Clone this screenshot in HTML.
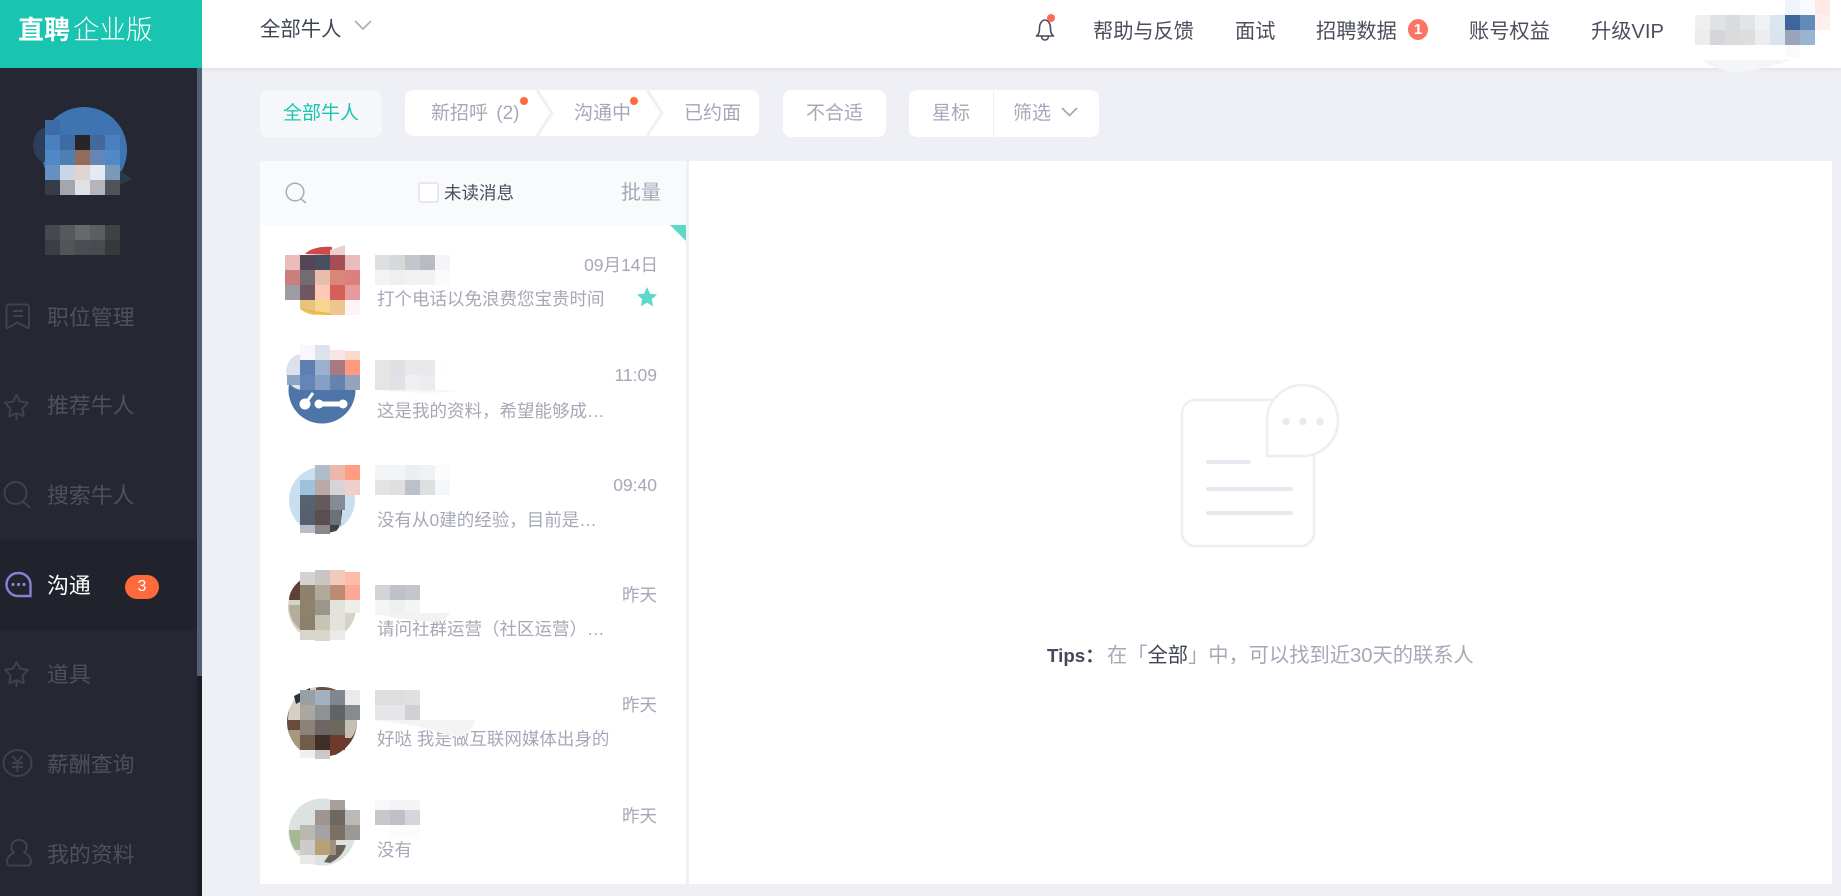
<!DOCTYPE html>
<html lang="zh"><head><meta charset="utf-8"><title>直聘企业版</title>
<style>
html,body{margin:0;padding:0;width:1841px;height:896px;overflow:hidden;background:#eff0f5}
body{position:relative;font-family:"Liberation Sans","Noto Sans CJK SC",sans-serif}
.b{position:absolute}
.t{position:absolute;white-space:nowrap;line-height:30px;height:30px}
.nav{font-size:21.875px;color:#4e5159;left:47px}
.top{font-size:20.2px;color:#4b4f5c;top:17px}
.tab{font-size:19px;color:#a6a8b7;top:99px}
.msg{font-size:17.5px;color:#a6a8b7;left:377px}
.time{font-size:17.5px;color:#a6a8b7;right:1184px}
svg.o{position:absolute;left:0;top:0}
</style></head><body>
<div class="b" style="left:0;top:0;width:1841px;height:68px;background:#fff;box-shadow:0 1px 4px rgba(200,204,216,.5)"></div>
<div class="b" style="left:0;top:0;width:202px;height:68px;background:#19c5b0"></div>
<div class="b" style="left:0;top:68px;width:197px;height:828px;background:#252832"></div>
<div class="b" style="left:197px;top:68px;width:5px;height:608px;background:#4f6074"></div>
<div class="b" style="left:197px;top:676px;width:5px;height:220px;background:#1a1e25"></div>
<div class="b" style="left:0;top:540px;width:197px;height:90px;background:#20232b"></div>

<div class="t" style="left:18px;top:15px;font-size:26px;color:#fff;font-weight:700">直聘<span style="font-weight:300;margin-left:3px;font-size:26.5px">企业版</span></div>
<div class="t" style="left:260px;top:15px;font-size:20.4px;color:#3f4555">全部牛人</div>

<div class="t top" style="left:1093px">帮助与反馈</div>
<div class="t top" style="left:1235px">面试</div>
<div class="t top" style="left:1316px">招聘数据</div>
<div class="b" style="left:1408px;top:19px;width:20px;height:21px;border-radius:50%;background:#fb7565;color:#fff;font-size:15px;font-weight:700;line-height:21px;text-align:center">1</div>
<div class="t top" style="left:1469px">账号权益</div>
<div class="t top" style="left:1591px">升级VIP</div>

<div class="b" style="left:260px;top:90px;width:122px;height:47px;border-radius:8px;background:#f6f7fa"></div>
<div class="b" style="left:405px;top:90px;width:354px;height:46px;border-radius:8px;background:#fff"></div>
<div class="b" style="left:783px;top:90px;width:103px;height:47px;border-radius:8px;background:#fff"></div>
<div class="b" style="left:909px;top:90px;width:190px;height:47px;border-radius:8px;background:#fff"></div>
<div class="b" style="left:993px;top:90px;width:1px;height:47px;background:#eff0f5"></div>

<div class="t tab" style="left:283px;color:#19c5b0">全部牛人</div>
<div class="t tab" style="left:431px">新招呼&nbsp;<span style="margin-left:3px">(2)</span></div>
<div class="t tab" style="left:574px">沟通中</div>
<div class="t tab" style="left:684px">已约面</div>
<div class="t tab" style="left:806px">不合适</div>
<div class="t tab" style="left:932px">星标</div>
<div class="t tab" style="left:1013px">筛选</div>

<div class="b" style="left:260px;top:161px;width:426px;height:723px;background:#fff"></div>
<div class="b" style="left:260px;top:161px;width:426px;height:64px;background:#f9fafc"></div>
<div class="b" style="left:689px;top:161px;width:1143px;height:723px;background:#fff"></div>
<div class="b" style="left:418px;top:182px;width:17px;height:17px;border:2px solid #e6e8ee;border-radius:3px;background:#fff"></div>
<div class="t" style="left:444px;top:178px;font-size:17.5px;color:#4a4f5e">未读消息</div>
<div class="t" style="left:621px;top:178px;font-size:20px;color:#a6a8b7">批量</div>

<div class="t time" style="top:250px;right:1183px">09月14日</div>
<div class="t msg" style="top:284px">打个电话以免浪费您宝贵时间</div>
<div class="t time" style="top:360px">11:09</div>
<div class="t msg" style="top:396px">这是我的资料，希望能够成…</div>
<div class="t time" style="top:470px">09:40</div>
<div class="t msg" style="top:505px">没有从0建的经验，目前是…</div>
<div class="t time" style="top:580px">昨天</div>
<div class="t msg" style="top:614px">请问社群运营（社区运营）…</div>
<div class="t time" style="top:690px">昨天</div>
<div class="t msg" style="top:724px">好哒 我是做互联网媒体出身的</div>
<div class="t time" style="top:801px">昨天</div>
<div class="t msg" style="top:835px">没有</div>

<div class="t nav" style="top:303px">职位管理</div>
<div class="t nav" style="top:391px">推荐牛人</div>
<div class="t nav" style="top:481px">搜索牛人</div>
<div class="t nav" style="top:571px;color:#fff">沟通</div>
<div class="t nav" style="top:660px">道具</div>
<div class="t nav" style="top:750px">薪酬查询</div>
<div class="t nav" style="top:840px">我的资料</div>
<div class="b" style="left:125px;top:575px;width:34px;height:24px;border-radius:12px;background:#ff6a3d;color:#fff;font-size:16px;line-height:24px;text-align:center">3</div>

<div class="t" style="left:1047px;top:641px;font-size:18.75px;font-weight:700;color:#444a5b">Tips：</div>
<div class="t" style="left:1107px;top:641px;font-size:20.25px;color:#a6a8b7">在「<span style="color:#3f4555">全部</span>」中，可以找到近30天的联系人</div>

<svg class="o" width="1841" height="896" viewBox="0 0 1841 896" xmlns="http://www.w3.org/2000/svg">
<!-- chevrons -->
<path d="M355 21l8 8 8-8" fill="none" stroke="#a9acb9" stroke-width="1.600"/>
<path d="M537 90l15 23-15 23M647 90l15 23-15 23" fill="none" stroke="#eff0f5" stroke-width="3"/>
<path d="M1062 108l7.500 7.500 7.500-7.500" fill="none" stroke="#a6a8b7" stroke-width="1.800"/>
<circle cx="524" cy="101" r="4" fill="#ff6a3d"/><circle cx="634" cy="101" r="4" fill="#ff6a3d"/>
<!-- bell -->
<path d="M1036.500 36c2.500-2 3-4 3-8 0-5 3-8 5.500-8s5.500 3 5.500 8c0 4 .5 6 3 8zM1041.500 36c0 2.500 1.500 4 3.500 4s3.500-1.500 3.500-4" fill="none" stroke="#484c59" stroke-width="1.600" stroke-linejoin="round"/>
<circle cx="1051" cy="18" r="4" fill="#fb6a55"/>
<!-- search -->
<circle cx="295" cy="192" r="8.800" fill="none" stroke="#a8abb8" stroke-width="1.500"/><path d="M301 199l5 4" stroke="#a8abb8" stroke-width="1.500"/>
<!-- corner & star -->
<path d="M670 225h16v16z" fill="#60d8c8"/>
<path d="M647 287l3 6.600 7 .9-5.200 4.700 1.400 7-6.200-3.500-6.200 3.500 1.400-7-5.200-4.700 7-.9z" fill="#5fd8c8"/>
<!-- illustration -->
<rect x="1182" y="400" width="132" height="146" rx="13" fill="#fff" stroke="#eceef3" stroke-width="2.500"/>
<path d="M1267 456V420.500a35.500 35.500 0 1 1 35.500 35.500z" fill="#fff" stroke="#eceef3" stroke-width="2.500"/>
<circle cx="1286" cy="421.500" r="3.700" fill="#e6e9ef"/><circle cx="1303" cy="421.500" r="3.700" fill="#e6e9ef"/><circle cx="1320" cy="421.500" r="3.700" fill="#e6e9ef"/>
<path d="M1208 462h41M1208 489h83M1208 513h83" stroke="#e6e9f0" stroke-width="4" stroke-linecap="round"/>
<!-- sidebar icons -->
<g fill="none" stroke="#3e424c" stroke-width="2" stroke-linejoin="round">
<path d="M9 304.500h17a3 3 0 0 1 3 3v21l-11.500-6L6.500 328.500v-21a3 3 0 0 1 2.500-3zM13 311h10M13 316h10"/>
<path d="M16.500 395l3.500 6.500 8 1.200-5.500 6 1.300 7.500-7.300-3-7.300 3 1.300-7.500-5.500-6 8-1.200zM16.500 413v7"/>
<circle cx="15.500" cy="493" r="11"/><path d="M22.500 501.500l7.500 6"/>
<path transform="translate(0 267)" d="M16.500 395l3.500 6.500 8 1.200-5.500 6 1.300 7.500-7.300-3-7.300 3 1.300-7.500-5.500-6 8-1.200zM16.500 413v7"/>
<ellipse cx="17.500" cy="763" rx="14" ry="13"/><path d="M12.500 756l5 6 5-6M12 763h11M12 767h11M17.500 762v10"/>
<path d="M19 840a7 7 0 0 1 5 12.500c4 2 7 5 7 9 0 2.500-1 4-3 4H10c-2 0-3-1.500-3-4 0-4 3-7 7-9a7 7 0 0 1 5-12.500z"/>
</g>
<path d="M18 573a11.500 11.500 0 1 0 0 23h12.500v-11.500a12 11.500 0 0 0-12.500-11.500z" fill="none" stroke="#8a7fd8" stroke-width="2.400"/>
<circle cx="13" cy="584.500" r="1.600" fill="#8a7fd8"/><circle cx="18.500" cy="584.500" r="1.600" fill="#8a7fd8"/><circle cx="24" cy="584.500" r="1.600" fill="#8a7fd8"/>

<!-- sidebar avatar -->
<circle cx="84" cy="150" r="43" fill="#3f74b3"/>
<ellipse cx="48" cy="145" rx="15" ry="18" fill="#2c3e58"/>
<path d="M100 195l12-30 20 14z" fill="#2c3a48"/><path d="M45 180h20v15H60c-8 0-15-5-15-15z" fill="#252832"/>
<g shape-rendering="crispEdges">
<rect x="45" y="120" width="15" height="15" fill="#3c6ba5"/>
<rect x="45" y="135" width="15" height="15" fill="#4a7fc0"/><rect x="60" y="135" width="15" height="15" fill="#3f6ba5"/><rect x="75" y="135" width="15" height="15" fill="#262626"/><rect x="90" y="135" width="15" height="15" fill="#436899"/><rect x="105" y="135" width="15" height="15" fill="#4a80bf"/>
<rect x="45" y="150" width="15" height="15" fill="#5088c8"/><rect x="60" y="150" width="15" height="15" fill="#4f7fb2"/><rect x="75" y="150" width="15" height="15" fill="#946a58"/><rect x="90" y="150" width="15" height="15" fill="#6485b5"/><rect x="105" y="150" width="15" height="15" fill="#5088c8"/>
<rect x="45" y="165" width="15" height="15" fill="#6690c0"/><rect x="60" y="165" width="15" height="15" fill="#cad6e8"/><rect x="75" y="165" width="15" height="15" fill="#e0d4d0"/><rect x="90" y="165" width="15" height="15" fill="#e5e9f3"/><rect x="105" y="165" width="15" height="15" fill="#7a9ab5"/>
<rect x="45" y="180" width="15" height="15" fill="#363d4a"/><rect x="60" y="180" width="15" height="15" fill="#a5a5ad"/><rect x="75" y="180" width="15" height="15" fill="#e0e0e5"/><rect x="90" y="180" width="15" height="15" fill="#b5b5ba"/><rect x="105" y="180" width="15" height="15" fill="#50525a"/>
<rect x="45" y="225" width="15" height="15" fill="#47474f"/><rect x="60" y="225" width="15" height="15" fill="#57585c"/><rect x="75" y="225" width="15" height="15" fill="#67686b"/><rect x="90" y="225" width="15" height="15" fill="#5b5d60"/><rect x="105" y="225" width="15" height="15" fill="#404145"/>
<rect x="45" y="240" width="15" height="15" fill="#3d3d45"/><rect x="60" y="240" width="15" height="15" fill="#535457"/><rect x="75" y="240" width="15" height="15" fill="#4b4d52"/><rect x="90" y="240" width="15" height="15" fill="#484b50"/><rect x="105" y="240" width="15" height="15" fill="#36383c"/>
</g>

<!-- header mosaic -->
<path d="M1702 60h90c-20 6-38 12-52 12s-28-4-38-12z" fill="#f4f5f7"/>
<g shape-rendering="crispEdges">
<rect x="1785" y="0" width="15" height="15" fill="#f0f3f9"/><rect x="1800" y="0" width="15" height="15" fill="#f9fafd"/><rect x="1815" y="0" width="15" height="15" fill="#ffe9e7"/>
<rect x="1695" y="15" width="15" height="15" fill="#efefef"/><rect x="1710" y="15" width="15" height="15" fill="#e1e2e5"/><rect x="1725" y="15" width="15" height="15" fill="#dadbdd"/><rect x="1740" y="15" width="15" height="15" fill="#e3e4e5"/><rect x="1755" y="15" width="15" height="15" fill="#f0f1f3"/><rect x="1770" y="15" width="15" height="15" fill="#dbe5f0"/><rect x="1785" y="15" width="15" height="15" fill="#3e659c"/><rect x="1800" y="15" width="15" height="15" fill="#628ab9"/><rect x="1815" y="15" width="15" height="15" fill="#ffefed"/>
<rect x="1695" y="30" width="15" height="15" fill="#ececec"/><rect x="1710" y="30" width="15" height="15" fill="#d5d6d9"/><rect x="1725" y="30" width="15" height="15" fill="#dadbdd"/><rect x="1740" y="30" width="15" height="15" fill="#dcdddf"/><rect x="1755" y="30" width="15" height="15" fill="#ecedef"/><rect x="1770" y="30" width="15" height="15" fill="#dae4f0"/><rect x="1785" y="30" width="15" height="15" fill="#9ba3ba"/><rect x="1800" y="30" width="15" height="15" fill="#98b4d1"/>
<rect x="1785" y="45" width="15" height="12" fill="#fafafa"/>
</g>

<!-- row 1 -->
<path d="M305 254c5-6 18-8 27-7v8z" fill="#d04848"/>
<path d="M285 260l15-6v6zM330 250l15-5v10h-15z" fill="#ebcfcf"/>
<g shape-rendering="crispEdges">
<rect x="285" y="255" width="15" height="15" fill="#ebbcbc"/><rect x="300" y="255" width="15" height="15" fill="#554655"/><rect x="315" y="255" width="15" height="15" fill="#475060"/><rect x="330" y="255" width="15" height="15" fill="#a34f55"/><rect x="345" y="255" width="15" height="15" fill="#ebbcbc"/>
<rect x="285" y="270" width="15" height="15" fill="#cc7d7d"/><rect x="300" y="270" width="15" height="15" fill="#726b72"/><rect x="315" y="270" width="15" height="15" fill="#e9bdab"/><rect x="330" y="270" width="15" height="15" fill="#d98679"/><rect x="345" y="270" width="15" height="15" fill="#dd7f7d"/>
<rect x="285" y="285" width="15" height="15" fill="#9c9ca5"/><rect x="300" y="285" width="15" height="15" fill="#6f5660"/><rect x="315" y="285" width="15" height="15" fill="#fcc9b4"/><rect x="330" y="285" width="15" height="15" fill="#d45f58"/><rect x="345" y="285" width="15" height="15" fill="#e59b9b"/>
<rect x="300" y="300" width="15" height="15" fill="#e6c47b"/><rect x="315" y="300" width="15" height="15" fill="#f5d68f"/><rect x="330" y="300" width="15" height="15" fill="#eec48f"/><rect x="345" y="300" width="15" height="15" fill="#fdf5f5"/>
<rect x="375" y="255" width="15" height="15" fill="#dedfe1"/><rect x="390" y="255" width="15" height="15" fill="#d7d8da"/><rect x="405" y="255" width="15" height="15" fill="#c3c6cd"/><rect x="420" y="255" width="15" height="15" fill="#babbc0"/><rect x="435" y="255" width="15" height="15" fill="#f5f5f7"/>
<rect x="375" y="270" width="15" height="15" fill="#f2f3f4"/><rect x="390" y="270" width="15" height="15" fill="#eeeff0"/><rect x="405" y="270" width="15" height="15" fill="#f1f2f3"/><rect x="420" y="270" width="15" height="15" fill="#f0f2f2"/><rect x="435" y="270" width="15" height="15" fill="#fafbfc"/>
</g>
<path d="M300 308c8 5 20 7 30 7v-2c-10-1-20-3-30-5z" fill="#f0b840"/>
<path d="M300 309c4 3 8 5 14 6h-14z" fill="#fff"/>

<!-- row 2 -->
<circle cx="322" cy="390" r="33.500" fill="#4d75a8"/>
<path d="M322 404h21" stroke="#fff" stroke-width="5"/><circle cx="319" cy="404" r="4.500" fill="#fff"/><circle cx="343" cy="404" r="4.500" fill="#fff"/><circle cx="305" cy="404" r="5.500" fill="#fff"/><path d="M305 404l8-11" stroke="#fff" stroke-width="3"/>
<ellipse cx="302" cy="372" rx="16" ry="18" fill="#dbe2ec"/>
<g shape-rendering="crispEdges">
<rect x="300" y="345" width="15" height="15" fill="#f7f8f9"/><rect x="315" y="345" width="15" height="15" fill="#dde2ec"/><rect x="330" y="350" width="15" height="10" fill="#f6e5e3"/><rect x="345" y="351" width="15" height="9" fill="#fdd9cd"/>
<rect x="300" y="360" width="15" height="15" fill="#5f7fb0"/><rect x="315" y="360" width="15" height="15" fill="#9bafcf"/><rect x="330" y="360" width="15" height="15" fill="#a87a82"/><rect x="345" y="360" width="15" height="15" fill="#fe9a7f"/>
<rect x="287" y="375" width="13" height="10" fill="#8ea5c5"/><rect x="300" y="375" width="15" height="15" fill="#6485b5"/><rect x="315" y="375" width="15" height="15" fill="#869fc5"/><rect x="330" y="375" width="15" height="15" fill="#6484b0"/><rect x="345" y="375" width="15" height="15" fill="#95a3bd"/>
<rect x="375" y="360" width="15" height="15" fill="#e5e5e5"/><rect x="390" y="360" width="15" height="15" fill="#dfe0e3"/><rect x="405" y="360" width="15" height="15" fill="#e9e9eb"/><rect x="420" y="360" width="15" height="15" fill="#e8e9ea"/><rect x="435" y="360" width="15" height="15" fill="#fdfefe"/>
<rect x="375" y="375" width="15" height="15" fill="#e5e5e3"/><rect x="390" y="375" width="15" height="15" fill="#dfe1e4"/><rect x="405" y="375" width="15" height="15" fill="#eeeff0"/><rect x="420" y="375" width="15" height="15" fill="#ebecee"/>
</g>
<path d="M375 390h85c-15 4-50 3-85 0z" fill="#f6f6f7"/>

<!-- row 3 -->
<circle cx="322" cy="500" r="33" fill="#c8dff0"/>
<path d="M334 510h8c0 8-2 18-6 21l-8 2z" fill="#3d4148"/>
<g shape-rendering="crispEdges">
<rect x="315" y="465" width="15" height="15" fill="#b0bcc8"/><rect x="330" y="465" width="15" height="15" fill="#eeb7ab"/><rect x="345" y="465" width="15" height="15" fill="#ff9c82"/>
<rect x="300" y="480" width="15" height="15" fill="#9dc2dc"/><rect x="315" y="480" width="15" height="15" fill="#b9a8a5"/><rect x="330" y="480" width="15" height="15" fill="#d6d3da"/><rect x="345" y="480" width="15" height="15" fill="#f0cfc8"/>
<rect x="300" y="495" width="15" height="15" fill="#56626f"/><rect x="315" y="495" width="15" height="15" fill="#64595d"/><rect x="330" y="495" width="15" height="15" fill="#858a95"/>
<rect x="300" y="510" width="15" height="15" fill="#55606e"/><rect x="315" y="510" width="15" height="15" fill="#5e4d50"/><rect x="330" y="510" width="11" height="15" fill="#6a7178"/>
<rect x="300" y="525" width="15" height="8" fill="#b8bcc4"/><rect x="315" y="525" width="15" height="9" fill="#8a8888"/>
<rect x="375" y="465" width="15" height="15" fill="#f3f4f5"/><rect x="390" y="465" width="15" height="15" fill="#f3f4f5"/><rect x="405" y="465" width="15" height="15" fill="#ecedf0"/><rect x="420" y="465" width="15" height="15" fill="#f0f1f2"/><rect x="435" y="465" width="15" height="15" fill="#fcfcfd"/>
<rect x="375" y="480" width="15" height="15" fill="#e3e3e6"/><rect x="390" y="480" width="15" height="15" fill="#dfdfe0"/><rect x="405" y="480" width="15" height="15" fill="#bcc0c9"/><rect x="420" y="480" width="15" height="15" fill="#dedfe1"/><rect x="435" y="480" width="15" height="15" fill="#f5f6f8"/>
</g>

<!-- row 4 -->
<circle cx="322" cy="607" r="34" fill="#d5d2c8"/>
<path d="M289 600c0-8 6-16 12-20v20z" fill="#5e4231"/>
<path d="M289 605h11v24c-7-5-11-14-11-24z" fill="#b5ac9c"/>
<g shape-rendering="crispEdges">
<rect x="300" y="572" width="15" height="13" fill="#d5d3cf"/><rect x="315" y="570" width="15" height="15" fill="#c8c6c2"/><rect x="330" y="570" width="15" height="15" fill="#f2c9bf"/><rect x="345" y="572" width="15" height="13" fill="#ffbaa9"/>
<rect x="300" y="585" width="15" height="15" fill="#8f7f6d"/><rect x="315" y="585" width="15" height="15" fill="#b1aa9c"/><rect x="330" y="585" width="15" height="15" fill="#bd8a74"/><rect x="345" y="585" width="15" height="15" fill="#fba996"/>
<rect x="300" y="600" width="15" height="15" fill="#8d836b"/><rect x="315" y="600" width="15" height="15" fill="#9a978a"/><rect x="330" y="600" width="15" height="15" fill="#e3e2dd"/><rect x="345" y="600" width="15" height="13" fill="#eeeee8"/>
<rect x="300" y="615" width="15" height="15" fill="#8d7f6d"/><rect x="315" y="615" width="15" height="15" fill="#c7c4b6"/><rect x="330" y="615" width="15" height="15" fill="#e4e2db"/>
<rect x="300" y="630" width="15" height="10" fill="#d8d6cc"/><rect x="315" y="630" width="15" height="11" fill="#d8d6cc"/><rect x="330" y="630" width="15" height="10" fill="#eaebe6"/>
<rect x="375" y="585" width="15" height="15" fill="#d3d4d6"/><rect x="390" y="585" width="15" height="15" fill="#bfc0c8"/><rect x="405" y="585" width="15" height="15" fill="#c5c6cd"/>
<rect x="375" y="600" width="15" height="15" fill="#f4f5f5"/><rect x="390" y="600" width="15" height="15" fill="#eeeff1"/><rect x="405" y="600" width="15" height="15" fill="#f3f4f5"/>
</g>
<path d="M375 613h75c-4 6-10 9-18 9-14-1-38-3-57-9z" fill="#f2f2f3"/>

<!-- row 5 -->
<circle cx="322" cy="722" r="35" fill="#6a4a3c"/>
<path d="M288 720c0-16 10-31 28-33v33z" fill="#d6cfc5"/><path d="M294 696l16-8v8l-14 8z" fill="#2e3136"/>
<path d="M345 720h12c0 8-2 14-6 18h-6z" fill="#c8bfb4"/>
<path d="M345 738h7c-3 8-10 14-17 17h-5v-5h15z" fill="#6d3a2d"/>
<path d="M288 730h12v20c-6-5-10-12-12-20z" fill="#a89880"/>
<g shape-rendering="crispEdges">
<rect x="300" y="690" width="15" height="15" fill="#98a0a5"/><rect x="315" y="690" width="15" height="15" fill="#a3b0c0"/><rect x="330" y="690" width="15" height="15" fill="#818790"/><rect x="345" y="690" width="15" height="15" fill="#eaeaea"/>
<rect x="300" y="705" width="15" height="15" fill="#aaa7a3"/><rect x="315" y="705" width="15" height="15" fill="#8f9192"/><rect x="330" y="705" width="15" height="15" fill="#5f6468"/><rect x="345" y="705" width="15" height="15" fill="#888b8e"/>
<rect x="300" y="720" width="15" height="15" fill="#8b8376"/><rect x="315" y="720" width="15" height="15" fill="#6d6463"/><rect x="330" y="720" width="15" height="15" fill="#6b685c"/>
<rect x="300" y="735" width="15" height="15" fill="#6f5c4a"/><rect x="315" y="735" width="15" height="15" fill="#3f2f2a"/><rect x="330" y="735" width="15" height="15" fill="#6d3a2d"/>
<rect x="300" y="750" width="15" height="8" fill="#f0f0f0"/><rect x="315" y="750" width="15" height="9" fill="#ccc8c8"/>
<rect x="375" y="690" width="15" height="15" fill="#dddee0"/><rect x="390" y="690" width="15" height="15" fill="#dddee0"/><rect x="405" y="690" width="15" height="15" fill="#dfe0e2"/>
<rect x="375" y="705" width="15" height="15" fill="#e6e6e8"/><rect x="390" y="705" width="15" height="15" fill="#e6e6e8"/><rect x="405" y="705" width="15" height="15" fill="#d0d1d6"/>
</g>
<path d="M375 720h100c-2 7-6 14-12 16-6 1-16 0-20-2-12-6-40-10-68-14z" fill="#f4f4f4"/>

<!-- row 6 -->
<circle cx="322" cy="832" r="33.500" fill="#dce2df"/>
<path d="M289 830h14v20h-8c-4-6-6-13-6-20z" fill="#a8b896"/><path d="M336 845h10c-2 8-8 14-16 18l-6-1z" fill="#6a625a"/>
<g shape-rendering="crispEdges">
<rect x="330" y="800" width="15" height="10" fill="#a79f99"/>
<rect x="315" y="810" width="15" height="15" fill="#9e9490"/><rect x="330" y="810" width="15" height="15" fill="#6d6862"/><rect x="345" y="810" width="15" height="15" fill="#bcb9b4"/>
<rect x="300" y="825" width="15" height="15" fill="#b9baaf"/><rect x="315" y="825" width="15" height="15" fill="#a3a3a3"/><rect x="330" y="825" width="15" height="15" fill="#7a7065"/><rect x="345" y="825" width="15" height="15" fill="#9c9894"/>
<rect x="300" y="840" width="15" height="15" fill="#cfcbc8"/><rect x="315" y="840" width="15" height="15" fill="#b9a078"/><rect x="330" y="840" width="6" height="15" fill="#9c9080"/>
<rect x="300" y="855" width="15" height="9" fill="#eae8e6"/>
<rect x="375" y="800" width="15" height="10" fill="#f8f8f9"/><rect x="390" y="800" width="15" height="10" fill="#f2f3f4"/><rect x="405" y="800" width="15" height="10" fill="#f4f4f5"/>
<rect x="375" y="810" width="15" height="15" fill="#c7c8cc"/><rect x="390" y="810" width="15" height="15" fill="#bfc0c6"/><rect x="405" y="810" width="15" height="15" fill="#d4d6db"/>
<rect x="390" y="825" width="30" height="13" fill="#fcfcfd"/>
</g>
</svg>
</body></html>
